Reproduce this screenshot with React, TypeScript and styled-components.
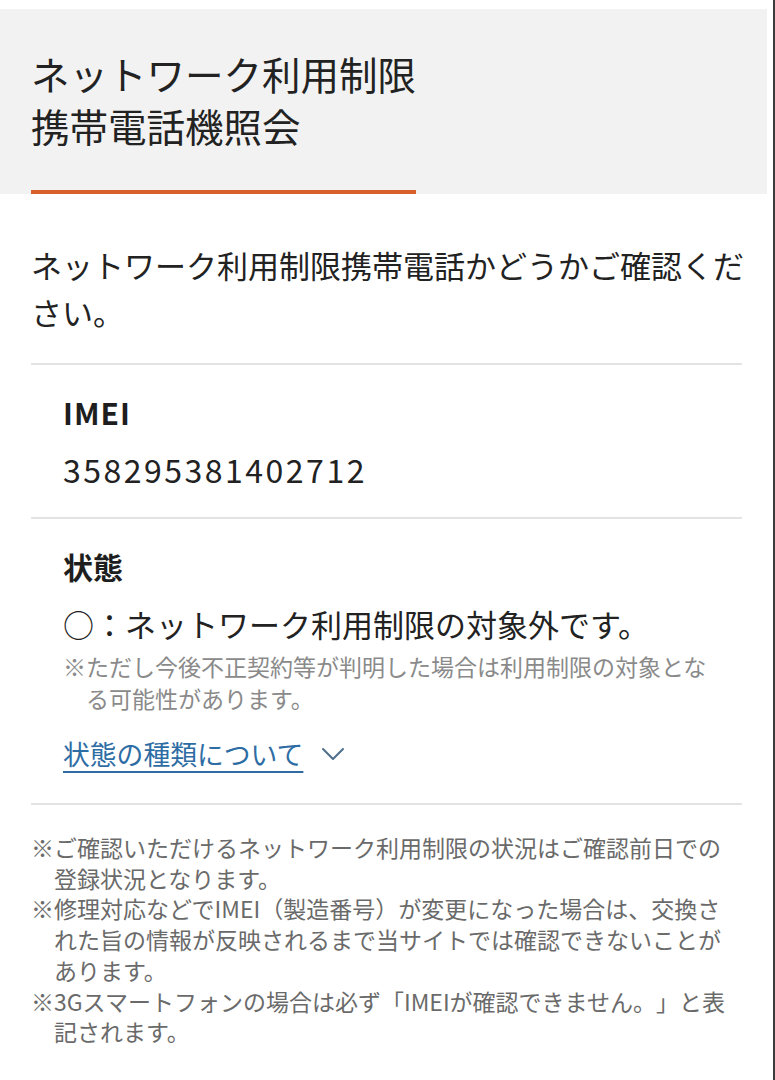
import React from "react";
import styled, { createGlobalStyle } from "styled-components";

const GlobalStyle = createGlobalStyle`
  html, body {
    margin: 0;
    padding: 0;
    background: #ffffff;
  }
  body {
    font-family: "Noto Sans CJK JP", "Noto Sans", sans-serif;
    color: #222222;
    text-spacing-trim: space-all;
    -webkit-font-smoothing: antialiased;
  }
  * { box-sizing: border-box; }
`;

const Page = styled.div`
  width: 775px;
  min-height: 1080px;
  padding-top: 9px;
  border-right: 2px solid #3c3c3c;
  background: #ffffff;
`;

const Header = styled.header`
  width: 767px;
  background: #f2f2f2;
  padding: 38px 0 0 31px;
`;

const Title = styled.h1`
  margin: 0;
  width: 385px;
  padding-bottom: 39px;
  border-bottom: 4px solid #d8602a;
  font-size: 38.5px;
  line-height: 52px;
  font-weight: 400;
  color: #222222;
  white-space: nowrap;
`;

const Main = styled.main`
  padding: 0 31px;
`;

const Lead = styled.p`
  margin: 47px -2px 28px 0;
  font-size: 31px;
  line-height: 47px;
  color: #222222;
`;

const Divider = styled.hr`
  margin: 0;
  border: none;
  height: 2px;
  background: #e3e3e3;
`;

const Section = styled.section`
  display: flex;
  flex-direction: column;
  padding: 27px 32px 28px;
`;

const Label = styled.h2<{ $latin?: boolean }>`
  margin: 0;
  font-size: 30px;
  line-height: 40px;
  font-weight: 700;
  letter-spacing: ${(p) => (p.$latin ? "1px" : "0")};
  color: #1e1e1e;
`;

const Value = styled.div`
  margin-top: 17px;
  font-size: 32px;
  line-height: 40px;
  letter-spacing: 2.5px;
  color: #222222;
`;

const Status = styled.div`
  margin-top: 16px;
  font-size: 31px;
  line-height: 44px;
  color: #222222;
`;

const Note = styled.p<{ $tone?: "light" | "dark" }>`
  margin: 0;
  padding-left: 23px;
  text-indent: -23px;
  font-size: 23px;
  line-height: ${(p) => (p.$tone === "dark" ? "30.7px" : "32px")};
  color: ${(p) => (p.$tone === "dark" ? "#6a6a6a" : "#8a8a8a")};
`;

const StatusNote = styled(Note)`
  margin-top: 4px;
`;

const LinkRow = styled.a`
  display: inline-flex;
  align-items: center;
  gap: 18px;
  margin-top: 22px;
  margin-bottom: 3px;
  align-self: flex-start;
  font-size: 26.8px;
  line-height: 36px;
  color: #2e6da4;
  text-decoration: none;
  cursor: pointer;
`;

const LinkText = styled.span`
  text-decoration: underline;
  text-decoration-thickness: 2px;
  text-underline-offset: 6px;
`;

const Footer = styled.div`
  width: 712px;
  margin-top: 27px;
  display: flex;
  flex-direction: column;
`;

const Chevron = () => (
  <svg width="24" height="14" viewBox="0 0 24 14" fill="none" aria-hidden="true">
    <path d="M2 2 L12 12 L22 2" stroke="#4f6f8c" strokeWidth="2" strokeLinecap="round" strokeLinejoin="round" />
  </svg>
);

export default function App() {
  return (
    <>
      <GlobalStyle />
      <Page>
        <Header>
          <Title>
            ネットワーク利用制限
            <br />
            携帯電話機照会
          </Title>
        </Header>
        <Main>
          <Lead>ネットワーク利用制限携帯電話かどうかご確認ください。</Lead>
          <Divider />
          <Section>
            <Label $latin>IMEI</Label>
            <Value>358295381402712</Value>
          </Section>
          <Divider />
          <Section>
            <Label>状態</Label>
            <Status>○：ネットワーク利用制限の対象外です。</Status>
            <StatusNote>※ただし今後不正契約等が判明した場合は利用制限の対象となる可能性があります。</StatusNote>
            <LinkRow>
              <LinkText>状態の種類について</LinkText>
              <Chevron />
            </LinkRow>
          </Section>
          <Divider />
          <Footer>
            <Note $tone="dark">※ご確認いただけるネットワーク利用制限の状況はご確認前日での登録状況となります。</Note>
            <Note $tone="dark">※修理対応などでIMEI（製造番号）が変更になった場合は、交換された旨の情報が反映されるまで当サイトでは確認できないことがあります。</Note>
            <Note $tone="dark">※3Gスマートフォンの場合は必ず「IMEIが確認できません。」と表記されます。</Note>
          </Footer>
        </Main>
      </Page>
    </>
  );
}
